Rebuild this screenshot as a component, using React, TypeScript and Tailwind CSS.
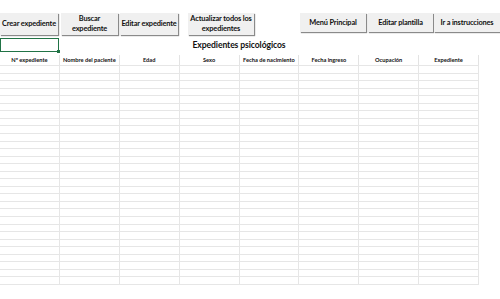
import React from "react";

const btn =
  "flex items-center justify-center text-center whitespace-nowrap bg-[#f0f0f0] shadow-[1px_1px_1px_#8a8a8a] font-bold text-[7.4px] leading-[10px] tracking-[-0.15px] text-[#111]";

const headers = [
  "Nº expediente",
  "Nombre del paciente",
  "Edad",
  "Sexo",
  "Fecha de nacimiento",
  "Fecha ingreso",
  "Ocupación",
  "Expediente",
];

export default function App() {
  const rows = Array.from({ length: 29 });
  return (
    <div
      className="w-[500px] h-[299px] bg-white overflow-hidden flex flex-col"
      style={{ fontFamily: "Lato, 'Liberation Sans', sans-serif" }}
    >
      <div className="flex items-start pt-[13px] h-[37px]">
        <div className={`${btn} w-[58px] h-[22px]`}>Crear expediente</div>
        <div className={`${btn} ml-[3px] w-[57px] h-[22px]`}>
          Buscar
          <br />
          expediente
        </div>
        <div className={`${btn} ml-[2px] w-[58px] h-[22px]`}>Editar expediente</div>
        <div className={`${btn} ml-[10px] w-[66px] h-[22px]`}>
          Actualizar todos los
          <br />
          expedientes
        </div>
        <div className={`${btn} ml-[46px] w-[66px] h-[19px]`}>Menú Principal</div>
        <div className={`${btn} ml-[2px] w-[65px] h-[19px]`}>Editar plantilla</div>
        <div className={`${btn} ml-[1px] w-[66px] h-[19px]`}>Ir a instrucciones</div>
      </div>
      <div className="grid grid-cols-[59px_1fr_59px] w-[478px] h-[18px] items-start">
        <div className="relative h-[14px] border border-[#217346] mt-[1px]">
          <div className="absolute right-[-2px] bottom-[-2px] w-[3px] h-[3px] bg-[#217346]" />
        </div>
        <div className="text-center font-bold text-[8.6px] leading-[14px] tracking-[-0.1px] text-[#111] pt-[1px] whitespace-nowrap">
          Expedientes psicológicos
        </div>
        <div />
      </div>
      <div className="w-[479px] grid grid-cols-8">
        {headers.map((h, i) => (
          <div
            key={i}
            className="h-[10px] border-r border-[#e3e3e3] flex items-center justify-center whitespace-nowrap font-bold text-[5.7px] leading-[8px] text-[#111]"
          >
            {h}
          </div>
        ))}
      </div>
      <div className="w-[479px] h-[220px] grid grid-cols-8 grid-rows-[repeat(29,1fr)] border-t border-[#e6e6e6]">
        {rows.map((_, r) =>
          headers.map((_, c) => (
            <div key={`${r}-${c}`} className="border-r border-b border-[#e6e6e6]" />
          ))
        )}
      </div>
    </div>
  );
}
